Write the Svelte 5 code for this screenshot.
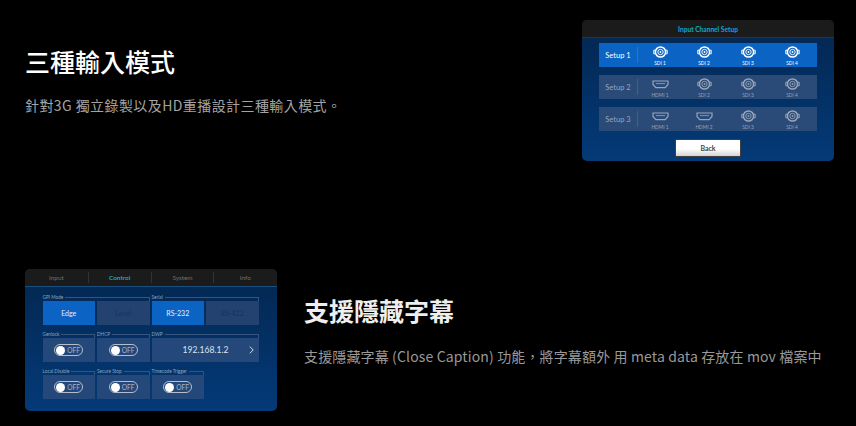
<script>
  const setups = [
    { name: 'Setup 1', active: true, ports: [['sdi','SDI 1'],['sdi','SDI 2'],['sdi','SDI 3'],['sdi','SDI 4']] },
    { name: 'Setup 2', active: false, ports: [['hdmi','HDMI 1'],['sdi','SDI 2'],['sdi','SDI 3'],['sdi','SDI 4']] },
    { name: 'Setup 3', active: false, ports: [['hdmi','HDMI 1'],['hdmi','HDMI 2'],['sdi','SDI 3'],['sdi','SDI 4']] }
  ];
  const tabs = ['Input', 'Control', 'System', 'Info'];
</script>

<main class="page">
  <section class="row first">
    <div class="copy">
      <h2>三種輸入模式</h2>
      <p class="one">針對3G 獨立錄製以及HD重播設計三種輸入模式。</p>
    </div>
    <div class="card channel">
      <div class="head"><span>Input Channel Setup</span></div>
      <div class="setups">
        {#each setups as s}
          <div class="setup" class:active={s.active}>
            <div class="name">{s.name}</div>
            {#each s.ports as p}
              <div class="port">
                <div class="ico">
                {#if p[0] === 'sdi'}
                  <svg width="15" height="12" viewBox="0 0 15 12" fill="none" stroke="currentColor">
                    <path d="M2.2 4.2 H0.8 V7.8 H2.2 M12.8 4.2 H14.2 V7.8 H12.8" stroke-width="1"/>
                    <circle cx="7.5" cy="6" r="5.1" stroke-width="1.5"/>
                    <circle cx="7.5" cy="6" r="2.7" stroke-width="0.9"/>
                    <circle cx="7.5" cy="6" r="0.9" fill="currentColor" stroke="none"/>
                  </svg>
                {:else}
                  <svg width="17" height="9" viewBox="0 0 17 9" fill="none" stroke="currentColor">
                    <path d="M1 1 H16 V4.4 L13.2 7.6 H3.8 L1 4.4 Z" stroke-width="1.2"/>
                    <path d="M4 3.6 H13" stroke-width="0.8"/>
                  </svg>
                {/if}
                </div>
                <span>{p[1]}</span>
              </div>
            {/each}
          </div>
        {/each}
      </div>
      <div class="backwrap"><button>Back</button></div>
    </div>
  </section>

  <section class="row second">
    <div class="card control">
      <div class="tabs">
        {#each tabs as t}
          <div class="tab" class:on={t === 'Control'}>{t}</div>
        {/each}
      </div>
      <div class="grid">
        <div class="field wide"><div class="legend"><span>GPI Mode</span><i></i></div>
          <div class="btns"><div class="b blue">Edge</div><div class="b dim">Level</div></div></div>
        <div class="field wide"><div class="legend"><span>Serial</span><i></i></div>
          <div class="btns"><div class="b blue">RS-232</div><div class="b dim">RS-422</div></div></div>

        <div class="field"><div class="legend"><span>Genlock</span><i></i></div>
          <div class="b">{@render toggle()}</div></div>
        <div class="field"><div class="legend"><span>DHCP</span><i></i></div>
          <div class="b">{@render toggle()}</div></div>
        <div class="field wide"><div class="legend"><span>DWP</span><i></i></div>
          <div class="b ip"><span>192.168.1.2</span>
            <svg width="5" height="8" viewBox="0 0 5 8" fill="none" stroke="currentColor" stroke-width="1"><path d="M0.8 0.6 L4.2 4 L0.8 7.4"/></svg>
          </div></div>

        <div class="field"><div class="legend"><span>Local Disable</span><i></i></div>
          <div class="b">{@render toggle()}</div></div>
        <div class="field"><div class="legend"><span>Secure Stop</span><i></i></div>
          <div class="b">{@render toggle()}</div></div>
        <div class="field"><div class="legend"><span>Timecode Trigger</span><i></i></div>
          <div class="b">{@render toggle()}</div></div>
      </div>
    </div>
    <div class="copy">
      <h2 class="soft">支援隱藏字幕</h2>
      <p class="two">支援隱藏字幕 (Close Caption) 功能，將字幕額外 用 meta data 存放在 mov 檔案中</p>
    </div>
  </section>
</main>

{#snippet toggle()}
  <div class="toggle"><b></b><span>OFF</span></div>
{/snippet}

<style>
  :global(body) { margin: 0; background: #000; }
  .page {
    width: 856px; height: 426px; box-sizing: border-box; overflow: hidden;
    padding: 20px 22px 0 25px; background: #000;
    font-family: "Noto Sans CJK TC", "Noto Sans", sans-serif;
    display: flex; flex-direction: column; gap: 108px;
  }
  .row { display: flex; }
  .first { justify-content: space-between; }
  .second { gap: 27px; }
  .copy { padding-top: 23px; }
  h2 { margin: 0; color: #fff; font-size: 25px; line-height: 36px; font-weight: 500; }
  h2.soft { color: #eee; font-weight: 700; }
  p { margin: 0; color: #999; font-size: 14px; line-height: 20px; }
  p.one { margin-top: 16px; letter-spacing: 0.42px; color: #a3a3a3; }
  p.two { margin-top: 18px; letter-spacing: 0.14px; }

  .card { width: 252px; border-radius: 5px; overflow: hidden; flex: none;
    background: linear-gradient(180deg, #03264f 0%, #043a78 100%);
    font-family: Lato, "Liberation Sans", sans-serif; }

  .channel { height: 141px; }
  .head { height: 17px; background: #1b1b1b; border-bottom: 1px solid #17385f; display: flex; align-items: center; justify-content: center; }
  .head span { color: #0fa8d0; font-size: 6.6px; font-weight: 700; }
  .setups { padding: 5px 17px 0 17px; display: flex; flex-direction: column; gap: 8px; }
  .setup { height: 24px; display: grid; grid-template-columns: 39px repeat(4, 44px); align-items: center; background: #2a4a78; color: #97a5b9; }
  .setup.active { background: #0b64c4; color: #fff; }
  .name { font-size: 7.5px; text-align: center; height: 16px; line-height: 17px; border-right: 1px solid rgba(255,255,255,.12); }
  .port { display: flex; flex-direction: column; align-items: center; padding-top: 3px; }
  .ico { height: 12px; display: flex; align-items: center; }
  .port svg { display: block; }
  .port span { font-size: 4.8px; line-height: 7px; margin-top: 2px; }
  .backwrap { display: flex; justify-content: center; margin-top: 8px; }
  button { width: 66px; height: 18px; padding: 0 0 1px; border: 1.5px solid #3f3f3f; border-radius: 1px; background: linear-gradient(180deg, #fff 0%, #fff 55%, #d4d4d4 100%); color: #444; font: 700 7px Lato, sans-serif; }

  .control { height: 142px; }
  .tabs { height: 17px; background: #1b1b1b; border-bottom: 1px solid #17507f; display: grid; grid-template-columns: repeat(4, 62.8px); align-items: center; }
  .tab { color: #6f6f6f; font-size: 6.4px; text-align: center; height: 11px; line-height: 11px; border-left: 1px solid #333; }
  .tab:first-child { border-left: 0; }
  .tab.on { color: #0fa8d0; font-weight: 700; }
  .grid { padding: 7px 17px 0 17.5px; display: grid; grid-template-columns: repeat(4, 52.5px); column-gap: 2px; row-gap: 6px; }
  .field.wide { grid-column: span 2; }
  .legend { height: 7px; line-height: 6px; display: flex; align-items: flex-start; gap: 2px; font-size: 4.7px; color: #8ea2bb; }
  .legend i { flex: 1; height: 3px; border-top: 1px solid #34557f; border-right: 1px solid #34557f; margin-top: 3px; }
  .btns { display: grid; grid-template-columns: 1fr 1fr; gap: 2px; }
  .b { height: 24px; background: #24487a; display: flex; align-items: center; justify-content: center; color: #dfe6ef; font-size: 7px; }
  .b.blue { background: #0b64c4; color: #e8eef6; }
  .b.dim { background: #24426f; color: #14345f; }
  .ip { font-size: 8.6px; color: #dde3ec; padding: 0 5px 0 31px; justify-content: space-between; }
  .ip svg { color: #d5dce6; }
  .toggle { width: 29px; height: 12px; box-sizing: border-box; border: 1px solid #b4becb; border-radius: 6px; display: flex; align-items: center; gap: 2px; padding-left: 1px; }
  .toggle b { width: 9px; height: 9px; border-radius: 50%; background: #fff; flex: none; }
  .toggle span { font-size: 6.6px; color: #a8b4c4; }
</style>
